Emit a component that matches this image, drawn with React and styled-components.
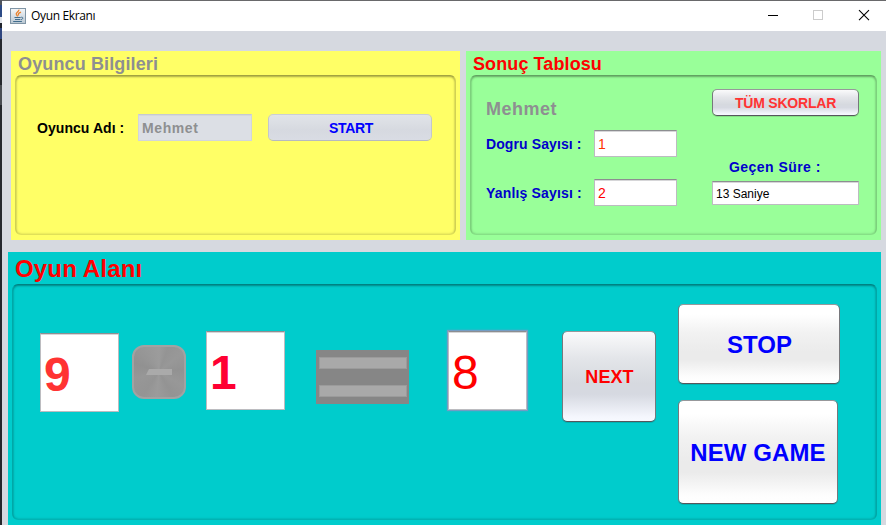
import React from "react";
import styled, { createGlobalStyle } from "styled-components";

const Global = createGlobalStyle`
  * { box-sizing: border-box; }
  html, body { margin: 0; padding: 0; overflow: hidden; }
  body { font-family: "Liberation Sans", Arial, sans-serif; background: #d6d9e0; }
`;

const Screen = styled.div`
  display: flex;
  width: 886px;
  height: 525px;
  overflow: hidden;
`;

const DesktopEdge = styled.div`
  flex: none;
  width: 2px;
  background: linear-gradient(#50545c 0 5px, #2c4a86 5px 17px, #dfe3ea 17px 23px, #20242c 23px 28px,
    #2f4680 28px 39px, #25282d 39px 85px, #4a4d52 85px 105px, #25282d 105px);
`;

const Window = styled.div`
  flex: 1;
  display: flex;
  flex-direction: column;
  min-width: 0;
  border-top: 1px solid #69696b;
  background: #d6d9e0;
`;

const TitleBar = styled.header`
  flex: none;
  display: flex;
  align-items: center;
  height: 30px;
  padding-left: 8px;
  background: #fff;
`;

const WindowTitle = styled.span`
  flex: 1;
  margin-left: 5px;
  font: 12px/30px "Open Sans", "Noto Sans", sans-serif;
  letter-spacing: ${(p) => p.$tracking}px;
  white-space: nowrap;
  color: #000;
`;

const Controls = styled.div`
  display: flex;
  align-items: center;
`;

const Control = styled.svg`
  display: block;
  width: 45px;
  height: 30px;
  shape-rendering: ${(p) => p.$crisp || "crispEdges"};
`;

const Content = styled.main`
  flex: 1;
  display: flex;
  flex-direction: column;
  gap: 12px;
  padding: 20px 5px 0 6px;
`;

const TopPanels = styled.div`
  display: flex;
  gap: 6px;
  height: 189px;
  padding-left: 3px;
`;

const Panel = styled.section`
  flex: none;
  display: flex;
  flex-direction: column;
  width: ${(p) => p.$w}px;
  height: ${(p) => p.$h}px;
  padding: 0 4px 5px;
  background: ${(p) => p.$bg};
`;

const PanelTitle = styled.h2`
  flex: none;
  margin: 0;
  height: ${(p) => p.$h}px;
  padding: 1px 0 0 3px;
  font-size: ${(p) => p.$size}px;
  font-weight: bold;
  line-height: ${(p) => p.$h}px;
  letter-spacing: ${(p) => p.$tracking || 0}px;
  white-space: nowrap;
  color: ${(p) => p.$color};
`;

const Frame = styled.div`
  flex: 1;
  display: flex;
  align-items: flex-start;
  border-radius: 6px;
  border: 1px solid rgba(0, 0, 0, 0.18);
  border-top-color: rgba(0, 0, 0, 0.36);
  border-bottom-color: rgba(0, 0, 0, 0.12);
  box-shadow: inset 0 1px 2px rgba(0, 0, 0, 0.28), inset 0 0 3px rgba(0, 0, 0, 0.16);
  padding: ${(p) => p.$pad};
`;

const Label = styled.span`
  display: block;
  width: ${(p) => p.$w}px;
  padding-top: ${(p) => p.$drop || 0}px;
  font-size: ${(p) => p.$size || 14}px;
  font-weight: bold;
  line-height: ${(p) => (p.$line || 27) - (p.$drop || 0)}px;
  letter-spacing: ${(p) => p.$tracking || 0}px;
  white-space: nowrap;
  color: ${(p) => p.$color};
`;

const Field = styled.div`
  flex: none;
  width: ${(p) => p.$w}px;
  height: ${(p) => p.$h}px;
  border: 1px solid #bcbcc0;
  border-top-color: #8d8e91;
  box-shadow: inset 0 1px 0 #d6d6d8;
  background: #fff;
  padding: ${(p) => p.$drop || 0}px 0 0 3px;
  font-size: ${(p) => p.$size || 14}px;
  font-weight: ${(p) => (p.$bold ? "bold" : "normal")};
  line-height: ${(p) => p.$h - 1 - (p.$drop ? 1 : 0)}px;
  letter-spacing: ${(p) => p.$tracking || 0}px;
  white-space: nowrap;
  color: ${(p) => p.$color};
`;

const DisabledField = styled(Field)`
  border-color: #d2d5db;
  border-top-color: #c6c9d0;
  box-shadow: inset 0 1px 0 #d4d7dd;
  background: #dcdfe5;
`;

const Digit = styled(Field)`
  margin-top: ${(p) => p.$top}px;
  outline: ${(p) => (p.$focused ? "1px solid #739cc4" : "none")};
  box-shadow: inset 0 1px 0 #d6d6d8${(p) => (p.$focused ? ", 0 0 2px 1px #53a9c8" : "")};
`;

const fills = {
  silver: "linear-gradient(#fafafb 0%, #e3e5e9 30%, #d6d9df 58%, #d6d9e1 70%, #f4f6fd 95%, #f7f9ff 100%)",
  white: "linear-gradient(#ffffff 0%, #ffffff 12%, #f2f2f2 35%, #ebebeb 60%, #ebebeb 70%, #fdfdfd 92%, #fff 100%)",
  disabled: "linear-gradient(#e1e4e8, #d6d9e0 60%, #d9dce4)",
};

const Button = styled.button`
  flex: none;
  width: ${(p) => p.$w}px;
  height: ${(p) => p.$h}px;
  margin: 0;
  padding: 2px 0 0 ${(p) => p.$shift || 0}px;
  border: 1px solid ${(p) => (p.$fill === "disabled" ? "#c3c6cd" : "#77787c")};
  border-top-color: ${(p) => (p.$fill === "disabled" ? "#cbced4" : "#97989b")};
  border-bottom-color: ${(p) => (p.$fill === "disabled" ? "#b6b9c0" : "#56575c")};
  border-radius: 5px;
  box-shadow: ${(p) => (p.$fill === "disabled" ? "none" : "0 1px 0 rgba(0, 0, 0, 0.12)")};
  background: ${(p) => fills[p.$fill]} padding-box;
  font: bold ${(p) => p.$size}px/${(p) => p.$h - 4}px "Liberation Sans", Arial, sans-serif;
  letter-spacing: ${(p) => p.$tracking || 0}px;
  white-space: nowrap;
  color: ${(p) => p.$color};
`;

const StartSlot = styled.div`
  margin-left: 16px;
`;

const ResultsColumn = styled.div`
  width: 226px;
`;

const ResultRow = styled.div`
  display: flex;
  margin-bottom: 22px;
`;

const TimeColumn = styled.div`
  width: 147px;
`;

const TimeLabel = styled(Label)`
  margin: 38px 0 0 17px;
`;

const Actions = styled.div`
  display: flex;
  flex-direction: column;
  gap: 16px;
  margin: 19px 0 0 22px;
`;

const NextSlot = styled.div`
  margin: 46px 0 0 35px;
`;

const MinusIcon = styled.div`
  flex: none;
  display: flex;
  align-items: center;
  justify-content: center;
  width: 54px;
  height: 54px;
  margin: 60px 20px 0 13px;
  border: 2px solid #a2a2a2;
  border-radius: 12px;
  background: conic-gradient(#9c9c9c, #949494 20deg, #989898 50deg, #929292 85deg, #989898 120deg,
    #939393 150deg, #9b9b9b 185deg, #949494 215deg, #979797 255deg, #919191 290deg, #989898 330deg, #9c9c9c);
`;

const EqualsIcon = styled.div`
  flex: none;
  display: flex;
  flex-direction: column;
  gap: 16px;
  width: 93px;
  height: 54px;
  margin: 65px 39px 0 31px;
  padding: 7px 2px 0 3px;
  background: #868686;
`;

const EqualsBar = styled.div`
  height: 12px;
  border: 1px solid #9b9b9b;
  background: #a9a9a9;
`;

function JavaIcon() {
  return (
    <svg width="16" height="16" viewBox="0 0 16 16">
      <defs>
        <linearGradient id="tile" x1="0" y1="0" x2="0" y2="1">
          <stop offset="0" stopColor="#f5f7f9" />
          <stop offset="1" stopColor="#b9c7d2" />
        </linearGradient>
      </defs>
      <rect x=".5" y=".5" width="15" height="15" fill="url(#tile)" stroke="#8095a5" />
      <path d="M8.9 1.7C9.3 3.9 5.1 4.5 6.4 6.7L7.8 8.4M11 4.2C8.3 5.2 7.7 6.1 8.9 7.4" fill="none" stroke="#e9812c" strokeWidth="1.3" />
      <path d="M4.5 9.5h6.2M5 11.5h5.4M3.2 13.5h8.7M11.2 9.2c2.5-.3 1.8 2.2-.2 2.5" fill="none" stroke="#426d8d" strokeWidth="1" />
    </svg>
  );
}

export default function App() {
  return (
    <Screen>
      <Global />
      <DesktopEdge />
      <Window>
        <TitleBar>
          <JavaIcon />
          <WindowTitle $tracking={-0.35}>Oyun Ekranı</WindowTitle>
          <Controls>
            <Control viewBox="0 0 45 30"><path d="M17 14h10v1H17z" fill="#000" /></Control>
            <Control viewBox="0 0 45 30"><rect x="17.5" y="9.5" width="9" height="9" fill="none" stroke="#ccc" /></Control>
            <Control viewBox="0 0 45 30" $crisp="auto"><path d="M18 9.2l10 10M28 9.2l-10 10" stroke="#000" strokeWidth="1.1" /></Control>
          </Controls>
        </TitleBar>
        <Content>
          <TopPanels>
            <Panel $w={449} $h={189} $bg="#ffff66">
              <PanelTitle $h={24} $size={18} $tracking={0.13} $color="#8e8f91">Oyuncu Bilgileri</PanelTitle>
              <Frame $pad="38px 0 0 21px">
                <Label $w={101} $drop={2} $tracking={0.06} $color="#000">Oyuncu Adı :</Label>
                <DisabledField $w={114} $h={27} $bold $tracking={0.6} $color="#8e8f91">Mehmet</DisabledField>
                <StartSlot>
                  <Button $w={164} $h={27} $size={14} $shift={2} $tracking={-0.3} $fill="disabled" $color="#0000ff">START</Button>
                </StartSlot>
              </Frame>
            </Panel>
            <Panel $w={415} $h={189} $bg="#99ff99">
              <PanelTitle $h={24} $size={18} $tracking={0.1} $color="#ff0000">Sonuç Tablosu</PanelTitle>
              <Frame $pad="13px 0 0 15px">
                <ResultsColumn>
                  <Label $size={18} $line={41} $tracking={0.5} $color="#8e8f91">Mehmet</Label>
                  <ResultRow>
                    <Label $w={108} $drop={2} $tracking={0.1} $color="#0000cc">Dogru Sayısı :</Label>
                    <Field $w={83} $h={27} $color="#ff3300">1</Field>
                  </ResultRow>
                  <ResultRow>
                    <Label $w={108} $drop={2} $tracking={0.17} $color="#0000cc">Yanlış Sayısı :</Label>
                    <Field $w={83} $h={27} $color="#ff0000">2</Field>
                  </ResultRow>
                </ResultsColumn>
                <TimeColumn>
                  <Button $w={147} $h={27} $size={14} $tracking={-0.2} $fill="silver" $color="#ff3333">TÜM SKORLAR</Button>
                  <TimeLabel $tracking={0.45} $color="#0000cc">Geçen Süre :</TimeLabel>
                  <Field $w={147} $h={24} $size={12} $drop={1} $color="#000">13 Saniye</Field>
                </TimeColumn>
              </Frame>
            </Panel>
          </TopPanels>
          <Panel $w={873} $h={273} $bg="#00cccc">
            <PanelTitle $h={32} $size={24} $tracking={0.15} $color="#ff0000">Oyun Alanı</PanelTitle>
            <Frame $pad="0 0 0 27px">
              <Digit $w={79} $h={79} $top={48} $size={48} $drop={2} $bold $color="#ff3333">9</Digit>
              <MinusIcon>
                <svg width="28" height="8" viewBox="0 0 28 8"><path d="M4 1h23v6H1z" fill="#aaa" /></svg>
              </MinusIcon>
              <Digit $w={79} $h={79} $top={46} $size={48} $drop={2} $bold $color="#ff0033">1</Digit>
              <EqualsIcon><EqualsBar /><EqualsBar /></EqualsIcon>
              <Digit $w={79} $h={79} $top={46} $size={48} $drop={2} $focused $color="#ff0000">8</Digit>
              <NextSlot>
                <Button $w={94} $h={91} $size={18} $shift={1} $tracking={0.1} $fill="silver" $color="#ff0000">NEXT</Button>
              </NextSlot>
              <Actions>
                <Button $w={162} $h={80} $size={24} $shift={1} $fill="white" $color="#0000ff">STOP</Button>
                <Button $w={160} $h={104} $size={24} $tracking={0.1} $fill="white" $color="#0000ff">NEW GAME</Button>
              </Actions>
            </Frame>
          </Panel>
        </Content>
      </Window>
    </Screen>
  );
}
